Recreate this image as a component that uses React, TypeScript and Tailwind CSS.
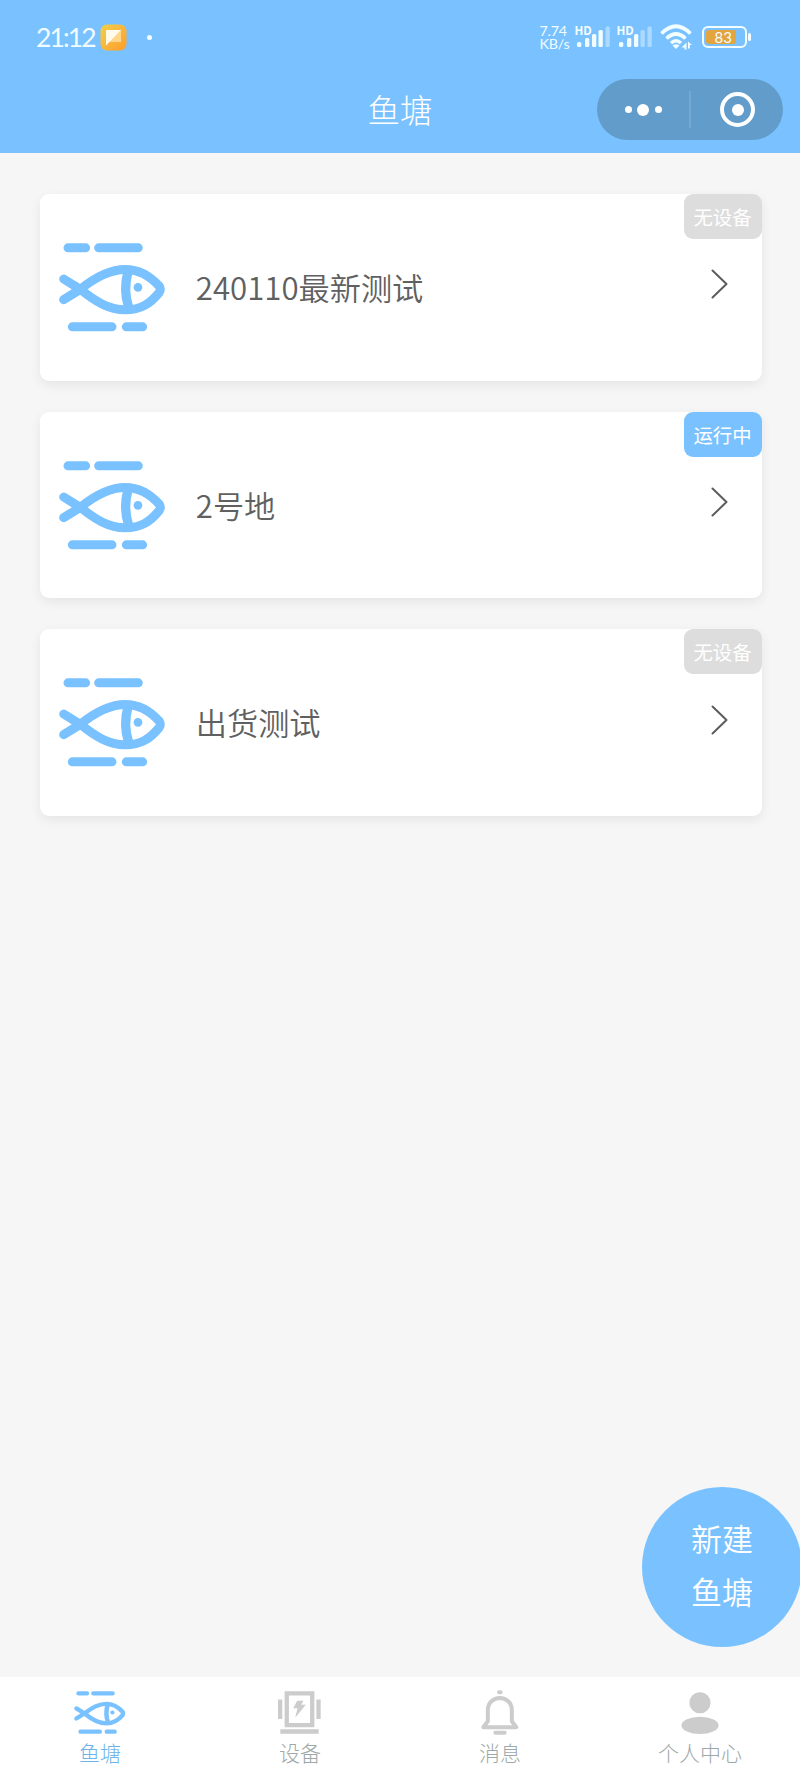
import React from "react";

type IconProps = { className?: string };

function FishIcon({ className }: IconProps) {
  return (
    <svg className={className} viewBox="87 189 316 266" fill="none" stroke="#7ac2ff" strokeLinecap="round" strokeLinejoin="round">
      <g strokeWidth="27">
        <path d="M114 203.500H167M206 203.500H325M127 440.500H246M289 440.500H338" />
      </g>
      <g strokeWidth="27">
        <path d="M101 297L151 328L101 359" />
        <path d="M151 328C194 293 236 268.500 286 268.500C332 268.500 364 292 388 319Q394 328 388 337C361 371 332 389.500 286 389.500C236 389.500 194 363 151 328Z" />
        <path d="M294 275Q279 330 296 382" strokeWidth="28" />
      </g>
      <circle cx="324" cy="322" r="13" fill="#7ac2ff" stroke="none" />
    </svg>
  );
}

function DeviceIcon({ className }: IconProps) {
  return (
    <svg className={className} viewBox="714 78 130 129" fill="#cccccc">
      <path fillRule="evenodd" d="M734 78H824V187H734ZM747 91V174H811V91Z" />
      <path d="M714 103H727V162H714ZM830 103H843V162H830ZM721 193H837V207H721Z" />
      <path d="M772 107H791L784 119H798L766 158L773 130H760Z" />
    </svg>
  );
}

function BellIcon({ className }: IconProps) {
  return (
    <svg className={className} viewBox="123 75 114 135" fill="none" stroke="#cccccc" strokeLinecap="round" strokeLinejoin="round">
      <path strokeWidth="12" d="M177 82H182M166 203.500H194" />
      <path strokeWidth="12" d="M143.500 169V135C143.500 113 160 99 179.500 99S215.500 113 215.500 135V169L229 186.500H130Z" />
    </svg>
  );
}

function UserIcon({ className }: IconProps) {
  return (
    <svg className={className} viewBox="722 75 113 127" fill="#cccccc">
      <circle cx="778.500" cy="107.500" r="32" />
      <ellipse cx="778.500" cy="176" rx="56" ry="26" />
    </svg>
  );
}

function NoteAppIcon() {
  return (
    <svg className="ml-[5px] h-[27px] w-[27px]" viewBox="0 0 27 27">
      <defs>
        <linearGradient id="note" x1="0" y1="0" x2="1" y2="1">
          <stop offset="0" stopColor="#f1d04d" />
          <stop offset="1" stopColor="#ff9c2b" />
        </linearGradient>
      </defs>
      <rect x="0.500" y="0.500" width="26" height="26" rx="6.500" fill="url(#note)" />
      <path d="M6 6H21V18H6Z" fill="#ffd58c" />
      <path d="M7 6H21L6 21.500V7Q6 6 7 6Z" fill="#fffbea" />
    </svg>
  );
}

function Signal({ active }: { active: number }) {
  const bars = [
    { x: 1, y: 17, h: 5 },
    { x: 9, y: 13, h: 9 },
    { x: 16, y: 9, h: 13 },
    { x: 22.5, y: 5, h: 17 },
    { x: 29.5, y: 1.5, h: 20.5 },
  ];
  return (
    <div className="relative h-[24px] w-[35px]">
      <svg className="h-[24px] w-[35px]" viewBox="0 0 35 24">
        {bars.map((b, i) => (
          <rect key={b.x} x={b.x} y={b.y} width={4.3} height={b.h} rx={1.5} fill={i < active ? "#f2fdff" : "#abd9ff"} />
        ))}
      </svg>
      <span className="absolute top-0 -left-[1px] font-['Open_Sans',sans-serif] text-[11.500px] leading-[11px] font-bold text-[#f2fdff]">HD</span>
    </div>
  );
}

function StatusBar() {
  return (
    <div className="flex h-[74px] items-center justify-between pr-[49.500px] pl-[36px] text-[#f0fcff]">
      <div className="flex items-center">
        <span className="w-[59px] font-[Lato,sans-serif] text-[26.500px] leading-[30px] tracking-[-1.900px] whitespace-nowrap">21:12</span>
        <NoteAppIcon />
        <span className="ml-[20px] size-[5px] rounded-full bg-[#f5fdff]" />
      </div>
      <div className="flex items-center">
        <div className="w-[36px] font-[Lato,sans-serif] text-[14.300px] leading-[13.500px] tracking-[-0.200px] whitespace-nowrap">
          <div>7.74</div>
          <div>KB/s</div>
        </div>
        <Signal active={4} />
        <div className="ml-[7px]">
          <Signal active={3} />
        </div>
        <svg className="ml-[7px] h-[26px] w-[34px]" viewBox="0 0 34 26" fill="none" stroke="#f2fdff">
          <path strokeWidth="3.600" d="M1.500 9.500Q16 -5 30.500 9.500M6.500 14.500Q16 5.500 25.500 14.500" />
          <path strokeWidth="3.400" d="M11 19Q16 14.500 21 19" />
          <path d="M12.500 21.500Q16 19 19.500 21.500L16 25Z" fill="#f2fdff" stroke="none" />
          <path d="M26.500 18.500V25.500H24.500V23.500H21.500ZM28 24.500V17.500L32 21H29.800V24.500Z" fill="#f2fdff" stroke="none" />
        </svg>
        <div className="ml-[8px] flex items-center">
          <div className="flex h-[22px] w-[45px] items-center rounded-[6px] border-2 border-[#f2fdff] p-[2px]">
            <div className="flex h-[14px] w-[30px] items-center justify-end rounded-[3px] bg-[#e3a53d] pr-[3.500px] font-[Lato,sans-serif] text-[15px] leading-[14px]">83</div>
          </div>
          <div className="ml-[1px] h-[8px] w-[3px] rounded-sm bg-[#f2fdff]" />
        </div>
      </div>
    </div>
  );
}

function Header() {
  return (
    <header className="h-[153px] shrink-0 bg-[#7ac2ff]">
      <StatusBar />
      <div className="grid h-[71px] grid-cols-[1fr_auto_1fr] items-center">
        <span />
        <h1 className="pb-[2px] text-[32.500px] leading-[40px] font-light text-white">鱼塘</h1>
        <div className="mr-[17px] flex h-[61px] w-[186px] items-center justify-self-end rounded-full bg-[#619cca]">
          <div className="flex w-[92px] items-center justify-center gap-[5.500px]">
            <span className="size-[7px] rounded-full bg-white" />
            <span className="size-[12px] rounded-full bg-white" />
            <span className="size-[7px] rounded-full bg-white" />
          </div>
          <span className="h-[37px] w-[1.500px] bg-[#74a9d4]" />
          <div className="flex flex-1 items-center justify-center pl-[2px]">
            <div className="flex size-[35px] items-center justify-center rounded-full border-[4.500px] border-white">
              <span className="size-[12px] rounded-full bg-white" />
            </div>
          </div>
        </div>
      </div>
    </header>
  );
}

function PondCard({ name, status, running }: { name: string; status: string; running?: boolean }) {
  return (
    <div className="relative flex h-[186.700px] items-center rounded-[9px] bg-white pr-[34px] pl-[19px] shadow-[0_4px_12px_rgba(0,0,0,0.07)]">
      <FishIcon className="h-[88.700px] w-[105.300px] overflow-visible" />
      <span className="mb-px ml-[31.500px] flex-1 text-[31.200px] leading-[44px] font-[350] text-[#606060]">{name}</span>
      <svg className="mb-[6px] h-[30px] w-[17px]" viewBox="0 0 17 30" fill="none" stroke="#5c5c5c" strokeWidth="2" strokeLinecap="round" strokeLinejoin="round">
        <path d="M1.500 1.500L15.500 15L1.500 28.500" />
      </svg>
      <span className={`absolute top-0 right-0 flex h-[45px] w-[78px] items-center justify-center rounded-[9px] text-[19.400px] text-white ${running ? "bg-[#7ac2ff]" : "bg-[#dddddd]"}`}>
        {status}
      </span>
    </div>
  );
}

function Tab({ label, active, children }: { label: string; active?: boolean; children: React.ReactNode }) {
  return (
    <div className="flex flex-1 flex-col items-center">
      <div className="flex h-[63px] items-center pr-px">{children}</div>
      <span className={`-mt-[6px] text-[21px] leading-[28px] font-light ${active ? "text-[#6fb4e8]" : "text-[#9da8a8]"}`}>{label}</span>
    </div>
  );
}

export default function App() {
  return (
    <div className="relative flex h-[1778px] w-[800px] flex-col overflow-hidden bg-[#f6f6f6] font-['Noto_Sans_CJK_SC',sans-serif]">
      <Header />
      <main className="flex flex-1 flex-col gap-[31px] pt-[41px] pr-[38.500px] pl-[40px]">
        <PondCard name="240110最新测试" status="无设备" />
        <PondCard name="2号地" status="运行中" running />
        <PondCard name="出货测试" status="无设备" />
      </main>
      <button className="absolute top-[1487px] left-[642px] flex size-[160px] flex-col items-center justify-center rounded-full bg-[#7ac2ff] pb-[5px] text-[31px] leading-[52.500px] font-[350] text-white">
        <span>新建</span>
        <span>鱼塘</span>
      </button>
      <nav className="flex h-[101px] shrink-0 bg-white pt-[4px]">
        <Tab label="鱼塘" active>
          <FishIcon className="h-[43px] w-[51.300px] overflow-visible" />
        </Tab>
        <Tab label="设备">
          <DeviceIcon className="h-[43px] w-[43px]" />
        </Tab>
        <Tab label="消息">
          <BellIcon className="h-[45px] w-[38px]" />
        </Tab>
        <Tab label="个人中心">
          <UserIcon className="h-[42px] w-[38px]" />
        </Tab>
      </nav>
    </div>
  );
}
